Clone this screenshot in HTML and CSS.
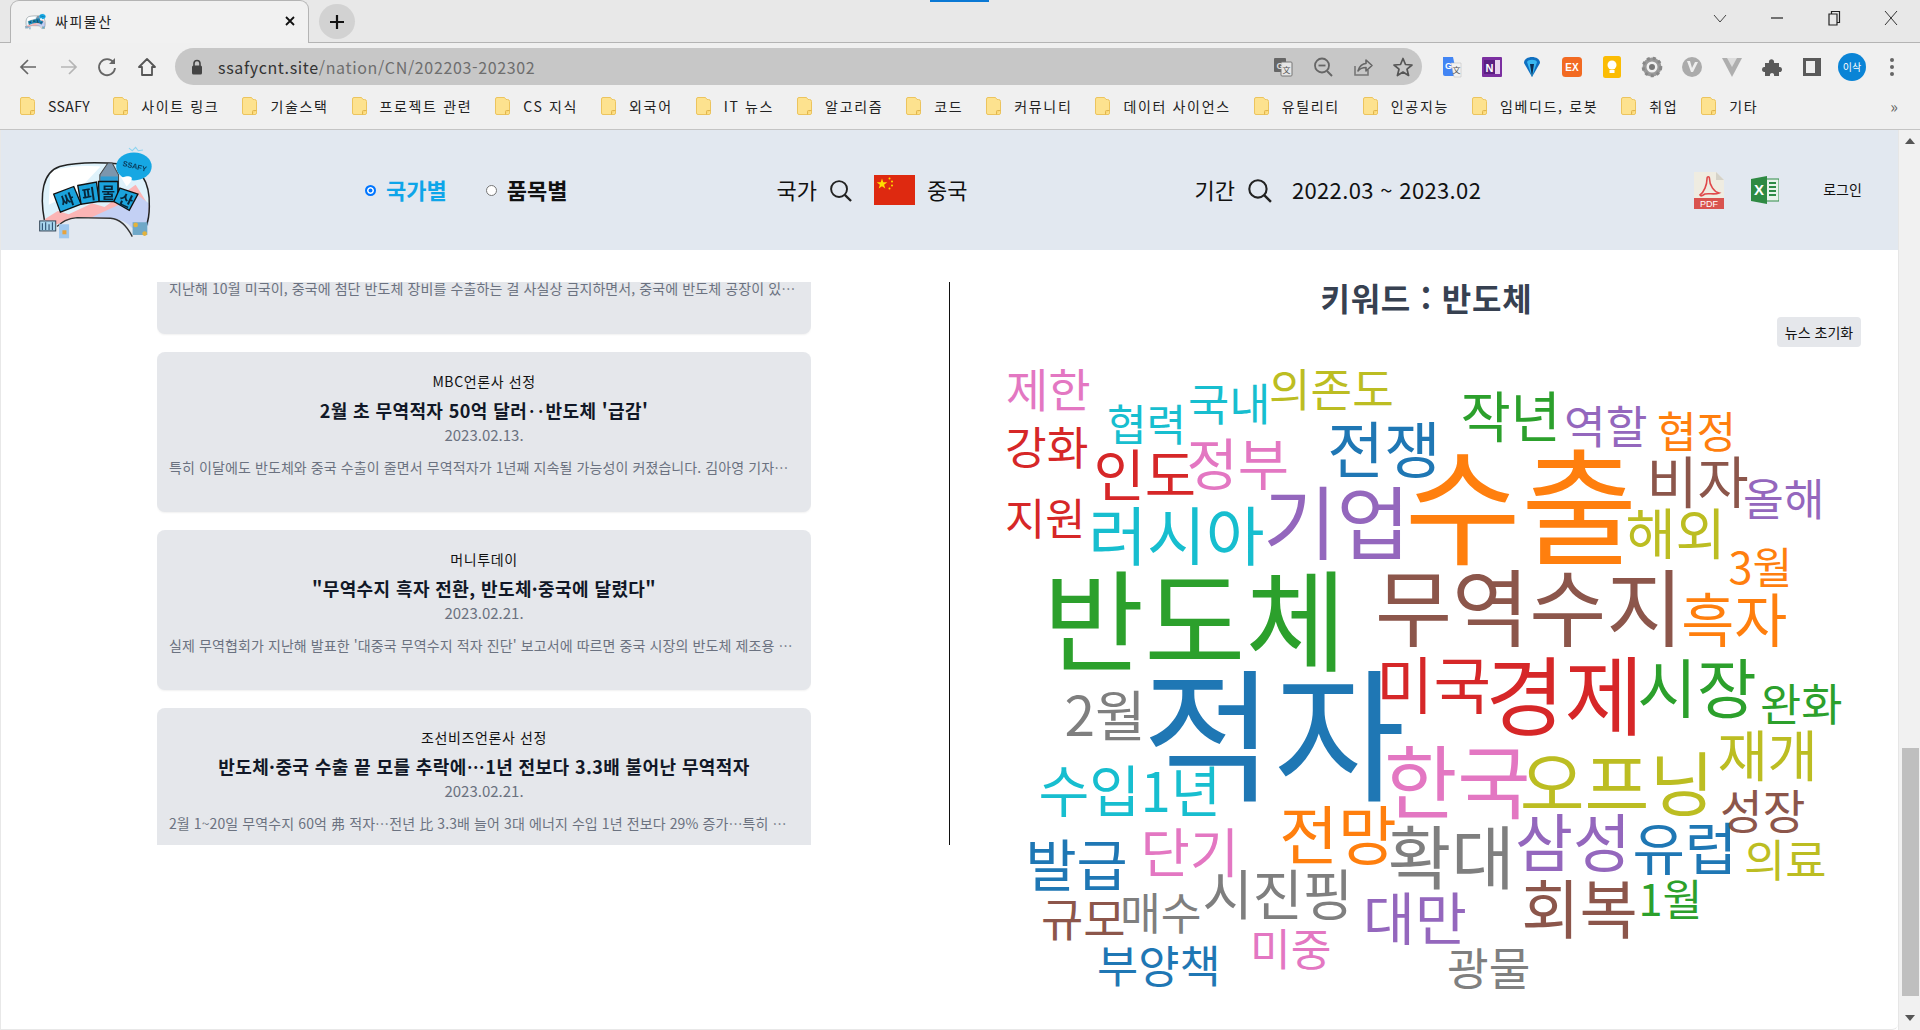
FILE: index.html
```html
<!DOCTYPE html>
<html lang="ko">
<head>
<meta charset="utf-8">
<title>싸피물산</title>
<link rel="stylesheet" href="styles.css">
</head>
<body>
<svg class="defs" width="0" height="0">
  <symbol id="logo" viewBox="50 25 350 290">
    <path d="M72 255C58 180 66 112 118 95C170 82 240 82 300 88C360 96 388 140 386 200C386 230 384 255 376 275L335 280C320 262 300 252 270 250L170 248C140 250 125 262 110 280L80 282Z" fill="#dff2fb"/>
    <path d="M90 110C140 92 200 92 240 95L170 170L85 210Z" fill="#fff"/>
    <path d="M74 252L112 228L145 238L215 205L252 216L345 150L384 212L384 240L300 250L170 246L110 268L78 275Z" fill="#fbb5b5"/>
    <path d="M215 246L305 205L350 180L384 205L384 272L335 280C320 262 300 252 270 250Z" fill="#c3d0f4"/>
    <path d="M110 275C125 262 140 250 170 248L270 250C300 252 320 275 335 305" fill="none" stroke="#333" stroke-width="4"/>
    <path d="M72 255C58 180 66 112 118 95C170 82 240 82 300 88C360 96 388 140 386 215C386 235 384 255 376 275" fill="none" stroke="#222" stroke-width="4.5"/>
    <path d="M238 120L262 85H275L294 120V192H238Z" fill="#7c96ad" stroke="#444" stroke-width="3"/>
    <path d="M240 125H292V190H240Z" fill="#2d9bd1"/>
    <ellipse cx="340" cy="95" rx="53" ry="42" fill="#16a7e3"/>
    <path d="M305 128C335 118 345 130 318 155L300 125Z" fill="#fff"/>
    <path d="M325 40l10 8 10-10 8 10 14-2" fill="none" stroke="#8ed4f0" stroke-width="3"/>
    <text class="logo-bubble" x="342" y="102" transform="rotate(14 342 95)">SSAFY</text>
    <path d="M100 178L160 155L182 208L120 232Z" fill="#1ba3dc" stroke="#111" stroke-width="4"/>
    <path d="M172 152L228 142L236 200L182 208Z" fill="#1ba3dc" stroke="#111" stroke-width="4"/>
    <path d="M234 140H292V200H236Z" fill="#1ba3dc" stroke="#111" stroke-width="4"/>
    <path d="M298 160L352 178L326 226L280 200Z" fill="#1ba3dc" stroke="#111" stroke-width="4"/>
    <text class="logo-word" x="140" y="212" transform="rotate(-20 140 195)">싸</text>
    <text class="logo-word" x="204" y="194" transform="rotate(-8 204 175)">피</text>
    <text class="logo-word" x="263" y="190">물</text>
    <text class="logo-word" x="316" y="212" transform="rotate(25 316 195)">산</text>
    <rect x="58" y="258" width="48" height="30" fill="#a8d6ee" stroke="#345" stroke-width="3"/>
    <path d="M66 285V265M76 285V262M86 285V268M96 285V262" stroke="#246" stroke-width="3"/>
    <rect x="116" y="268" width="30" height="42" fill="#9fc8ef"/>
    <rect x="126" y="286" width="12" height="12" fill="#e8a33d"/>
    <rect x="336" y="262" width="44" height="38" fill="#6fa8c8"/>
    <circle cx="345" cy="270" r="7" fill="#e3b23c"/>
    <circle cx="372" cy="296" r="7" fill="#e3b23c"/>
  </symbol>
  <symbol id="folder" viewBox="0 0 15 20">
    <path d="M.5 3A1.5 1.5 0 0 1 2 1.500H9.500L11 3.500H12.500A2 2 0 0 1 14.500 5.500V17A1.500 1.500 0 0 1 13 18.500H2A1.500 1.500 0 0 1 .5 17Z" fill="#fde28f" stroke="#ecc45e"/>
    <path d="M10.500 18.500V15.500A1 1 0 0 1 11.500 14.500H14.500" fill="#fbd673" stroke="#e0b54c"/>
  </symbol>
  <symbol id="lens" viewBox="0 0 24 24">
    <circle cx="10.500" cy="10.500" r="8.300" fill="none" stroke="#222" stroke-width="2"/>
    <path d="M16.500 16.500L23 23" stroke="#222" stroke-width="2.400"/>
  </symbol>
</svg>

<div class="window">
  <div class="tabstrip">
    <div class="tab">
      <svg class="favicon"><use href="#logo"/></svg>
      <span class="tab-title">싸피물산</span>
      <svg class="tab-close" viewBox="0 0 12 12"><path d="M2 2L10 10M10 2L2 10" stroke="#111" stroke-width="1.800"/></svg>
    </div>
    <div class="newtab"><svg viewBox="0 0 16 16"><path d="M8 1V15M1 8H15" stroke="#111" stroke-width="2.200"/></svg></div>
    <div class="accent"></div>
    <div class="winctl">
      <svg viewBox="0 0 16 16"><path d="M2 5L8 12L14 5" fill="none" stroke="#444"/></svg>
      <svg viewBox="0 0 16 16"><path d="M2 8H14" stroke="#222" stroke-width="1.200"/></svg>
      <svg viewBox="0 0 16 16"><path d="M3 4H11V15H3ZM5.500 4V1.500H13.500V12.500H11" fill="none" stroke="#222" stroke-width="1.200"/></svg>
      <svg viewBox="0 0 16 16"><path d="M2 1L14 15M14 1L2 15" stroke="#333"/></svg>
    </div>
  </div>

  <div class="toolbar">
    <svg class="ti" viewBox="0 0 22 22"><path d="M19 11H4M11 4L4 11L11 18" fill="none" stroke="#666" stroke-width="1.700"/></svg>
    <svg class="ti ti-fwd" viewBox="0 0 22 22"><path d="M3 11H18M11 4L18 11L11 18" fill="none" stroke="#b5b5b5" stroke-width="1.700"/></svg>
    <svg class="ti ti-rel" viewBox="0 0 22 22"><path d="M17.500 6.500A8 8 0 1 0 19 12" fill="none" stroke="#666" stroke-width="1.800"/><path d="M13 8H19V2Z" fill="#666"/></svg>
    <svg class="ti" viewBox="0 0 22 22"><path d="M11 3L3 11H6V19H16V11H19Z" fill="none" stroke="#555" stroke-width="1.800" stroke-linejoin="round"/></svg>
    <div class="omnibox">
      <svg class="lock" viewBox="0 0 12 16"><path d="M3 7V4.500A3 3 0 0 1 9 4.500V7" fill="none" stroke="#444" stroke-width="1.600"/><rect x="1" y="6.500" width="10" height="9" rx="1.500" fill="#444"/></svg>
      <span class="url"><b>ssafycnt.site</b>/nation/CN/202203-202302</span>
      <span class="spacer"></span>
      <svg class="ti" viewBox="0 0 22 22"><rect x="2" y="2" width="12" height="14" rx="1" fill="#666"/><rect x="9" y="6" width="11" height="14" rx="1" fill="#e6e6e6" stroke="#777"/><text class="t-g" x="8" y="13">G</text><text class="t-wen" x="14.500" y="17">文</text></svg>
      <svg class="ti" viewBox="0 0 22 22"><circle cx="10" cy="9.500" r="7" fill="none" stroke="#666" stroke-width="1.800"/><path d="M15 15L20 20" stroke="#666" stroke-width="2"/><path d="M6.500 9.500H13.500" stroke="#666" stroke-width="1.800"/></svg>
      <svg class="ti" viewBox="0 0 22 22"><path d="M3 10V19H16V14" fill="none" stroke="#777" stroke-width="1.600"/><path d="M6 15C7 10 11 7.500 14 7.500V4L20 9.500L14 15V11.500C11 11.500 8 12.500 6 15Z" fill="none" stroke="#666" stroke-width="1.600" stroke-linejoin="round"/></svg>
      <svg class="ti" viewBox="0 0 22 22"><path d="M11 2.500L13.500 8.500L20 9L15 13.200L16.600 19.500L11 16L5.400 19.500L7 13.200L2 9L8.500 8.500Z" fill="none" stroke="#555" stroke-width="1.700" stroke-linejoin="round"/></svg>
    </div>
    <div class="exts">
      <svg class="ti" viewBox="0 0 22 22"><path d="M2 1H12L16 20H4A2 2 0 0 1 2 18Z" fill="#4285f4"/><path d="M10 7H20V21H13Z" fill="#f2f2f2" stroke="#bbb" stroke-width=".5"/><text class="t-g t-w" x="7.500" y="13">G</text><text class="t-wen" x="15.500" y="17">文</text></svg>
      <svg class="ti" viewBox="0 0 22 22"><rect x="1" y="1" width="20" height="20" rx="1" fill="#7b2fa0"/><rect x="12" y="4" width="7" height="14" fill="#e7d3ef"/><rect x="3" y="4" width="11" height="14" fill="#5b1f83"/><text class="t-n" x="8.500" y="15.500">N</text></svg>
      <svg class="ti" viewBox="0 0 22 22"><path d="M11 21L3 7C3 3 7 1 11 1C15 1 19 3 19 7Z" fill="#0f6fc0"/><path d="M11 21L6 6C7 3 15 3 16 6Z" fill="#39b6f0"/><path d="M11 21L9 8H13Z" fill="#0b2d55"/></svg>
      <svg class="ti" viewBox="0 0 22 22"><rect x="1" y="1" width="20" height="20" rx="3.500" fill="#f26a22"/><text class="t-ex" x="11" y="15">EX</text></svg>
      <svg class="ti" viewBox="0 0 22 22"><rect x="2" y="0" width="18" height="22" rx="2.500" fill="#fbbc04"/><circle cx="11" cy="9" r="4.500" fill="#fff"/><rect x="8.500" y="14" width="5" height="3" fill="#fff"/></svg>
      <svg class="ti" viewBox="0 0 22 22"><circle cx="11" cy="11" r="7.500" fill="none" stroke="#999" stroke-width="4"/><circle cx="11" cy="11" r="8.800" fill="none" stroke="#888" stroke-width="3" stroke-dasharray="3 3"/><circle cx="11" cy="11" r="3" fill="#777"/></svg>
      <svg class="ti" viewBox="0 0 22 22"><circle cx="11" cy="11" r="10" fill="#ababab"/><path d="M6 5L10 16H12L17 6H14L11 12L9 5Z" fill="#eee"/></svg>
      <svg class="ti" viewBox="0 0 22 22"><path d="M1 2H21L11 21Z" fill="#aeaeae"/><path d="M6 2H16L11 11Z" fill="#ddd"/></svg>
      <svg class="ti" viewBox="0 0 22 22"><path d="M4 7H8C7 2 14 2 13 7H18V11C22 10 22 17 18 16V20H13C14 16 8 16 9 20H4V16C0 17 0 10 4 11Z" fill="#5a5a5a"/></svg>
      <svg class="ti" viewBox="0 0 22 22"><rect x="2" y="2" width="18" height="18" fill="#5a5a5a"/><rect x="5" y="5" width="9" height="12" fill="#eee"/></svg>
      <div class="avatar">이삭</div>
      <svg class="ti" viewBox="0 0 22 22"><circle cx="11" cy="4" r="2" fill="#666"/><circle cx="11" cy="11" r="2" fill="#666"/><circle cx="11" cy="18" r="2" fill="#666"/></svg>
    </div>
  </div>

  <div class="bookmarks">
    <span class="bm"><svg class="fd"><use href="#folder"/></svg><span class="bm-en">SSAFY</span></span>
    <span class="bm"><svg class="fd"><use href="#folder"/></svg>사이트 링크</span>
    <span class="bm"><svg class="fd"><use href="#folder"/></svg>기술스택</span>
    <span class="bm"><svg class="fd"><use href="#folder"/></svg>프로젝트 관련</span>
    <span class="bm"><svg class="fd"><use href="#folder"/></svg>CS 지식</span>
    <span class="bm"><svg class="fd"><use href="#folder"/></svg>외국어</span>
    <span class="bm"><svg class="fd"><use href="#folder"/></svg>IT 뉴스</span>
    <span class="bm"><svg class="fd"><use href="#folder"/></svg>알고리즘</span>
    <span class="bm"><svg class="fd"><use href="#folder"/></svg>코드</span>
    <span class="bm"><svg class="fd"><use href="#folder"/></svg>커뮤니티</span>
    <span class="bm"><svg class="fd"><use href="#folder"/></svg>데이터 사이언스</span>
    <span class="bm"><svg class="fd"><use href="#folder"/></svg>유틸리티</span>
    <span class="bm"><svg class="fd"><use href="#folder"/></svg>인공지능</span>
    <span class="bm"><svg class="fd"><use href="#folder"/></svg>임베디드, 로봇</span>
    <span class="bm"><svg class="fd"><use href="#folder"/></svg>취업</span>
    <span class="bm"><svg class="fd"><use href="#folder"/></svg>기타</span>
    <span class="spacer"></span>
    <span class="more">»</span>
  </div>

  <div class="viewport">
    <div class="page">
      <header class="site-header">
        <svg class="logo"><use href="#logo"/></svg>
        <nav class="mode">
          <label class="radio on"><span class="dot"></span>국가별</label>
          <label class="radio"><span class="dot"></span>품목별</label>
        </nav>
        <div class="pick country">
          <span>국가</span>
          <svg class="lens"><use href="#lens"/></svg>
          <svg class="flag" viewBox="0 0 41 30">
            <rect width="41" height="30" fill="#de2910"/>
            <path d="M8 3.500L9.300 7.300H13.300L10.100 9.700L11.300 13.500L8 11.200L4.700 13.500L5.900 9.700L2.700 7.300H6.700Z" fill="#ffde00"/>
            <circle cx="15.500" cy="3.500" r="1" fill="#ffde00"/><circle cx="18" cy="6.500" r="1" fill="#ffde00"/><circle cx="18" cy="10.500" r="1" fill="#ffde00"/><circle cx="15.500" cy="13.500" r="1" fill="#ffde00"/>
          </svg>
          <span class="flag-name">중국</span>
        </div>
        <div class="pick period">
          <span>기간</span>
          <svg class="lens big"><use href="#lens"/></svg>
          <span class="dates">2022.03 ~ 2023.02</span>
        </div>
        <div class="actions">
          <svg class="pdf" viewBox="0 0 30 37">
            <path d="M0 0H22L30 8V37H0Z" fill="#efece1"/>
            <path d="M22 0L30 8H22Z" fill="#d5d2c8"/>
            <path d="M6 23C10 20 13 13 13 7C13 4 15.500 4 15.500 7C15.500 13 20 20 25 21C21 23 15 21 11 22C9 23 7 25 6 23Z" fill="none" stroke="#e0484a" stroke-width="1.600"/>
            <rect y="26" width="30" height="11" fill="#d9534f"/>
            <text class="pdf-t" x="15" y="35">PDF</text>
          </svg>
          <svg class="xls" viewBox="0 0 28 28">
            <rect x="11" y="3" width="17" height="22" fill="#e9f3ec" stroke="#2e8b46"/>
            <path d="M18 7H25M18 11H25M18 15H25M18 19H25" stroke="#2e8b46" stroke-width="2"/>
            <path d="M0 3L16 0V28L0 25Z" fill="#2f8a43"/>
            <text class="xls-t" x="8" y="19">X</text>
          </svg>
          <a class="login">로그인</a>
        </div>
      </header>

      <main class="content">
        <section class="news">
          <div class="news-inner">
            <article class="card clipped">
              <p class="ex">지난해 10월 미국이, 중국에 첨단 반도체 장비를 수출하는 걸 사실상 금지하면서, 중국에 반도체 공장이 있…</p>
            </article>
            <article class="card">
              <p class="src">MBC언론사 선정</p>
              <h3>2월 초 무역적자 50억 달러‥반도체 '급감'</h3>
              <p class="date">2023.02.13.</p>
              <p class="ex">특히 이달에도 반도체와 중국 수출이 줄면서 무역적자가 1년째 지속될 가능성이 커졌습니다. 김아영 기자…</p>
            </article>
            <article class="card">
              <p class="src">머니투데이</p>
              <h3>"무역수지 흑자 전환, 반도체·중국에 달렸다"</h3>
              <p class="date">2023.02.21.</p>
              <p class="ex">실제 무역협회가 지난해 발표한 '대중국 무역수지 적자 진단' 보고서에 따르면 중국 시장의 반도체 제조용 …</p>
            </article>
            <article class="card">
              <p class="src">조선비즈언론사 선정</p>
              <h3>반도체·중국 수출 끝 모를 추락에…1년 전보다 3.3배 불어난 무역적자</h3>
              <p class="date">2023.02.21.</p>
              <p class="ex">2월 1~20일 무역수지 60억 弗 적자…전년 比 3.3배 늘어 3대 에너지 수입 1년 전보다 29% 증가…특히 …</p>
            </article>
          </div>
        </section>
        <div class="divider"></div>
        <section class="keyword">
          <h2>키워드 : 반도체</h2>
          <div class="reset-row"><button class="reset">뉴스 초기화</button></div>
          <svg class="cloud" viewBox="1000 350 898 670">
            <g class="c6"><text x="1006" y="410" font-size="46">제한</text><text x="1186.400" y="488.300" font-size="55.800">정부</text><text x="1384" y="815.400" font-size="79.700">한국</text><text x="1140.400" y="876.300" font-size="53.600">단기</text><text x="1250" y="969.200" font-size="44.300">미중</text></g>
            <g class="c3"><text x="1005" y="468" font-size="45.300">강화</text><text x="1005" y="538" font-size="43.700">지원</text><text x="1093.400" y="499.300" font-size="55.800">인도</text><text x="1485.500" y="732" font-size="86">경제</text><text x="1376" y="711.800" font-size="62.500">미국</text></g>
            <g class="c9"><text x="1107" y="444" font-size="43">협력</text><text x="1188" y="424" font-size="44.800">국내</text><text x="1088.300" y="563.300" font-size="63.900">러시아</text><text x="1038.400" y="815.300" font-size="55.300">수입</text><text x="1140.400" y="815.300" font-size="54.600">1년</text></g>
            <g class="c8"><text x="1269" y="410" font-size="45.200">의존도</text><text x="1625.400" y="557.300" font-size="54.600">해외</text><text x="1717.400" y="779.300" font-size="54.600">재개</text><text x="1519.700" y="814.300" font-size="70.500">오프닝</text><text x="1744" y="880.200" font-size="44.800">의료</text></g>
            <g class="c0"><text x="1327.300" y="475.800" font-size="61.700">전쟁</text><text x="1632.400" y="873.300" font-size="57">유럽</text><text x="1142.300" y="792.700" font-size="143">적자</text><text x="1025.400" y="889.300" font-size="55.600">발급</text><text x="1097" y="986.200" font-size="44.800">부양책</text></g>
            <g class="c4"><text x="1263" y="556" font-size="80">기업</text><text x="1564" y="447.200" font-size="45.300">역할</text><text x="1743" y="519.200" font-size="44.300">올해</text><text x="1515" y="869" font-size="63">삼성</text><text x="1363" y="943.300" font-size="56.400">대만</text></g>
            <g class="c2"><text x="1043" y="666" font-size="110">반도체</text><text x="1460.400" y="440.300" font-size="54.600">작년</text><text x="1637.200" y="716.300" font-size="64.900">시장</text><text x="1760" y="724.200" font-size="44.800">완화</text><text x="1638.500" y="919.200" font-size="43.300">1월</text></g>
            <g class="c5"><text x="1375" y="643.400" font-size="83.800">무역수지</text><text x="1646.400" y="506.300" font-size="55.600">비자</text><text x="1720" y="832.200" font-size="46.400">성장</text><text x="1521.200" y="935.800" font-size="63.400">회복</text><text x="1041" y="939.200" font-size="46">규모</text></g>
            <g class="c1"><text x="1404.500" y="557.600" font-size="126.700">수출</text><text x="1657" y="451.200" font-size="43">협정</text><text x="1728.500" y="587.200" font-size="43.300">3월</text><text x="1681.300" y="645.300" font-size="57.700">흑자</text><text x="1279.200" y="862.300" font-size="63.900">전망</text></g>
            <g class="c7"><text x="1447" y="989.200" font-size="45.300">광물</text><text x="1387.700" y="887.300" font-size="69">확대</text><text x="1064.400" y="739.300" font-size="55">2월</text><text x="1202.400" y="918.300" font-size="54.600">시진핑</text><text x="1120" y="933.200" font-size="44.300">매수</text></g>
          </svg>
        </section>
      </main>
    </div>
    <div class="scrollbar">
      <span class="arrow up"></span>
      <span class="thumb"></span>
      <span class="arrow down"></span>
    </div>
  </div>
</div>
</body>
</html>
```

FILE: styles.css
```css
* { box-sizing: border-box; }
html, body { margin: 0; padding: 0; width: 1920px; height: 1030px; overflow: hidden; }
body { font-family: "Noto Sans CJK KR", "Noto Sans", sans-serif; color: #111; background: #fff; }
.defs { position: absolute; }
.window { display: flex; flex-direction: column; height: 1030px; }
.spacer { flex: 1; }

/* tab strip */
.tabstrip { height: 43px; background: #e8e8e8; border-bottom: 1px solid #b4b4b4; display: flex; align-items: flex-start; padding-left: 10px; }
.tab { width: 299px; height: 43px; background: #f1f1f1; border: 1px solid #b4b4b4; border-bottom: 0; border-radius: 9px 9px 0 0; display: flex; align-items: center; padding: 0 12px 2px 14px; }
.favicon { width: 21px; height: 20px; }
.tab-title { font-size: 14px; letter-spacing: 1.500px; margin-left: 9px; flex: 1; color: #222; }
.tab-close { width: 12px; height: 12px; }
.newtab { width: 36px; height: 35px; margin: 4px 0 0 10px; border-radius: 50%; background: #d2d2d2; display: flex; align-items: center; justify-content: center; }
.newtab svg { width: 16px; height: 16px; }
.accent { width: 59px; height: 2px; margin-left: 575px; background: #0a78d4; }
.winctl { margin-left: auto; display: flex; gap: 41px; padding: 10px 21px 0 0; }
.winctl svg { width: 16px; height: 16px; }

/* toolbar */
.toolbar { height: 43px; background: #f0f0f0; display: flex; align-items: center; padding: 4px 0 0 17px; gap: 18px; }
.ti { width: 22px; height: 22px; flex: none; }
.ti-fwd { margin-left: 1px; }
.ti-rel { margin-left: -2px; }
.omnibox { width: 1247px; height: 37px; margin-left: -1px; border-radius: 19px; background: #c7c7c7; display: flex; align-items: center; padding: 0 8px 0 16px; gap: 18px; }
.lock { width: 12px; height: 16px; flex: none; }
.url { font-size: 16px; color: #6e6e6e; margin-left: -3px; letter-spacing: .64px; }
.url b { font-weight: 400; color: #333; }
.exts { display: flex; align-items: center; gap: 18px; margin-left: 1px; }
.avatar { width: 28px; height: 28px; margin: 0 -3px; border-radius: 50%; background: #0a84d6; color: #fff; font-size: 10px; line-height: 28px; text-align: center; flex: none; }
.t-g { font: 700 9px "Liberation Sans", sans-serif; fill: #ddd; text-anchor: middle; }
.t-w { fill: #fff; }
.t-wen { font-size: 8px; fill: #555; text-anchor: middle; }
.t-n { font: 700 11px "Liberation Sans", sans-serif; fill: #fff; text-anchor: middle; }
.t-ex { font: 700 10px "Liberation Sans", sans-serif; fill: #fff; text-anchor: middle; }

/* bookmarks */
.bookmarks { height: 44px; background: #f0f0f0; border-bottom: 1px solid #c4c4c4; display: flex; align-items: center; padding: 0 22px 3px 20px; gap: 23px; font-size: 14px; letter-spacing: 1.650px; color: #222; }
.bm { display: flex; align-items: center; gap: 13px; white-space: nowrap; }
.bm-en { letter-spacing: .4px; }
.fd { width: 15px; height: 20px; flex: none; }
.more { font-size: 16px; color: #666; letter-spacing: 0; }

/* page */
.viewport { flex: 1; min-height: 0; display: flex; }
.page { flex: 1; min-width: 0; display: flex; flex-direction: column; border-left: 1px solid #e8e8e8; border-bottom: 1px solid #e8e8e8; border-bottom-right-radius: 6px; }
.scrollbar { width: 22px; background: #f1f1f1; border-left: 1px solid #e6e6e6; display: flex; flex-direction: column; align-items: center; padding-left: 1px; }
.arrow { width: 0; height: 0; border-left: 5px solid transparent; border-right: 5px solid transparent; }
.arrow.up { border-bottom: 6px solid #555; margin-top: 8px; }
.thumb { width: 17px; height: 248px; background: #bfbfbf; margin-top: 604px; }
.arrow.down { border-top: 6px solid #555; margin-top: 19px; }

.site-header { height: 120px; background: #e2e8f0; display: flex; align-items: center; padding-left: 36px; flex: none; }
.logo { width: 117px; height: 97px; margin-top: 2px; filter: blur(.6px); flex: none; }
.logo-bubble { font: 700 22px "Liberation Sans", sans-serif; fill: #0b3a58; text-anchor: middle; }
.logo-word { font-size: 44px; font-weight: 700; fill: #08263a; text-anchor: middle; }
.mode { display: flex; gap: 39px; margin-left: 211px; font-size: 22px; font-weight: 700; margin-top: -2px; }
.radio { display: flex; align-items: center; gap: 10px; }
.radio .dot { width: 11px; height: 11px; border-radius: 50%; border: 1px solid #767676; background: #fff; margin-top: 2px; }
.radio.on { color: #0ea5e9; }
.radio.on .dot { background: #0075ff; border: 2px solid #0075ff; box-shadow: inset 0 0 0 1.500px #fff; }
.pick { display: flex; align-items: center; font-size: 22px; margin-top: -2px; }
.pick .lens, .pick .flag { margin-top: 2px; }
.country { margin-left: 209px; }
.lens { width: 23px; height: 23px; margin-left: 12px; }
.flag { width: 41px; height: 30px; margin-left: 22px; }
.flag-name { margin-left: 12px; }
.period { margin-left: 227px; }
.lens.big { width: 25px; height: 25px; }
.dates { margin-left: 20px; letter-spacing: .35px; }
.actions { display: flex; align-items: center; margin-left: 213px; }
.pdf { width: 30px; height: 37px; }
.pdf-t { font: 400 9px "Liberation Sans", sans-serif; fill: #fff; text-anchor: middle; }
.xls { width: 28px; height: 28px; margin-left: 27px; }
.xls-t { font: 700 15px "Liberation Sans", sans-serif; fill: #fff; text-anchor: middle; }
.login { margin-left: 44px; font-size: 14px; color: #111; margin-top: -2px; }

.content { flex: 1; min-height: 0; display: flex; align-items: flex-start; padding: 32px 0 0 156px; }
.news { width: 654px; height: 563px; overflow: hidden; flex: none; }
.news-inner { margin-top: -108px; display: flex; flex-direction: column; gap: 18px; }
.card { height: 160px; background: #e5e7eb; border-radius: 8px; box-shadow: 0 1px 2px rgba(0,0,0,.06); padding: 18px 12px 0; text-align: center; }
.card.clipped { padding-top: 103px; }
.card p, .card h3 { margin: 0; white-space: nowrap; overflow: hidden; }
.src { font-size: 14px; line-height: 22px; color: #111; letter-spacing: .6px; }
.card h3 { font-size: 18px; line-height: 28px; margin-top: 4px; font-weight: 700; color: #111827; letter-spacing: .4px; }
.date { font-size: 15px; line-height: 22px; margin-top: 5px; color: #6b7280; }
.card .ex { font-size: 14px; line-height: 22px; margin-top: 10px; color: #6b7280; text-align: left; letter-spacing: .1px; }
.card.clipped .ex { margin-top: 0; }
.divider { width: 1px; height: 563px; background: #111; margin-left: 138px; flex: none; }
.keyword { flex: 1; margin-left: 5px; display: flex; flex-direction: column; margin-top: 0; }
.keyword h2 { margin: -5px 0 0; font-size: 32px; line-height: 40px; font-weight: 700; color: #374151; text-align: center; letter-spacing: .8px; }
.reset-row { display: flex; justify-content: flex-end; padding-right: 37px; margin-top: 0; }
.reset { width: 84px; height: 30px; border: 0; border-radius: 4px; background: #e5e7eb; font: 400 14px "Noto Sans CJK KR", sans-serif; color: #111; padding: 0; }
.cloud { width: 898px; height: 670px; margin-left: 45px; display: block; }
.cloud text { font-family: "Noto Sans CJK KR", sans-serif; }
.c0 { fill: #1f77b4; } .c1 { fill: #ff7f0e; } .c2 { fill: #2ca02c; } .c3 { fill: #d62728; } .c4 { fill: #9467bd; }
.c5 { fill: #8c564b; } .c6 { fill: #e377c2; } .c7 { fill: #7f7f7f; } .c8 { fill: #bcbd22; } .c9 { fill: #17becf; }
```
